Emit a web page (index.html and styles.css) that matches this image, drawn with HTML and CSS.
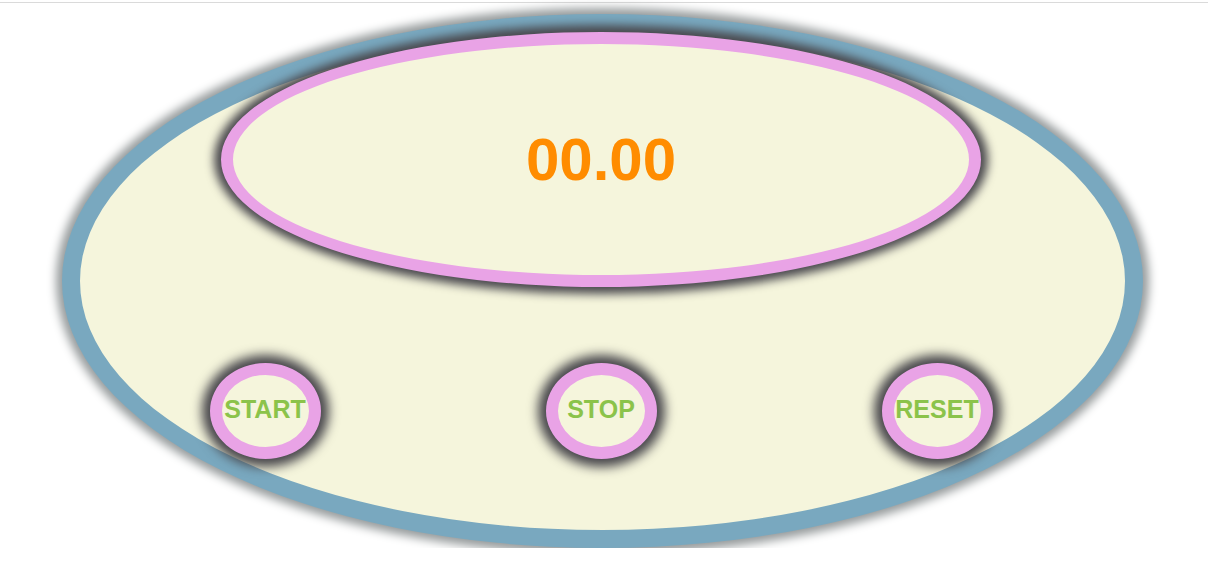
FILE: index.html
```html
<!DOCTYPE html>
<html lang="en">
<head>
  <meta charset="UTF-8">
  <meta name="viewport" content="width=device-width, initial-scale=1.0">
  <title>Stopwatch</title>
  <link rel="stylesheet" href="styles.css">
</head>
<body>
  <div class="topline"></div>

  <div class="watch">
    <div class="display">
      <span id="time">00.00</span>
    </div>

    <div class="controls">
      <button class="btn" id="start">START</button>
      <button class="btn" id="stop">STOP</button>
      <button class="btn" id="reset">RESET</button>
    </div>
  </div>
</body>
</html>
```

FILE: styles.css
```css
* {
  box-sizing: border-box;
}
body {
  margin: 0;
  font-family: 'Liberation Sans', Arial, sans-serif;
  background: #fff;
}
.topline {
  margin-top: 2px;
  border-top: 1px solid #dadada;
}
.watch {
  width: 1081px;
  height: 534px;
  margin: 11px 0 0 62px;
  border: 18px solid #79a8bf;
  border-radius: 50%;
  background: #f5f5dc;
  box-shadow: 0 0 10px 6px #979c9d;
  display: flex;
  flex-direction: column;
  align-items: center;
}
.display {
  width: 760px;
  height: 255px;
  margin-right: 3px;
  border: 12px solid #e9a3e6;
  border-radius: 50%;
  background: #f5f5dc;
  box-shadow: 0 0 10px 7px #4a494e;
  display: flex;
  align-items: center;
  justify-content: center;
}
#time {
  color: #ff8c00;
  font-size: 60px;
  font-weight: bold;
}
.controls {
  width: 1008px;
  margin-top: 76px;
  margin-right: 3px;
  display: grid;
  grid-template-columns: repeat(3, 1fr);
  justify-items: center;
}
.btn {
  width: 111px;
  height: 96px;
  padding: 0 0 3px;
  border: 12px solid #e9a3e6;
  border-radius: 50%;
  background: #f5f5dc;
  box-shadow: 0 0 11px 8px #48474c;
  color: #8bc34a;
  font-family: 'Liberation Sans', Arial, sans-serif;
  font-size: 25px;
  font-weight: bold;
  cursor: pointer;
}
```
